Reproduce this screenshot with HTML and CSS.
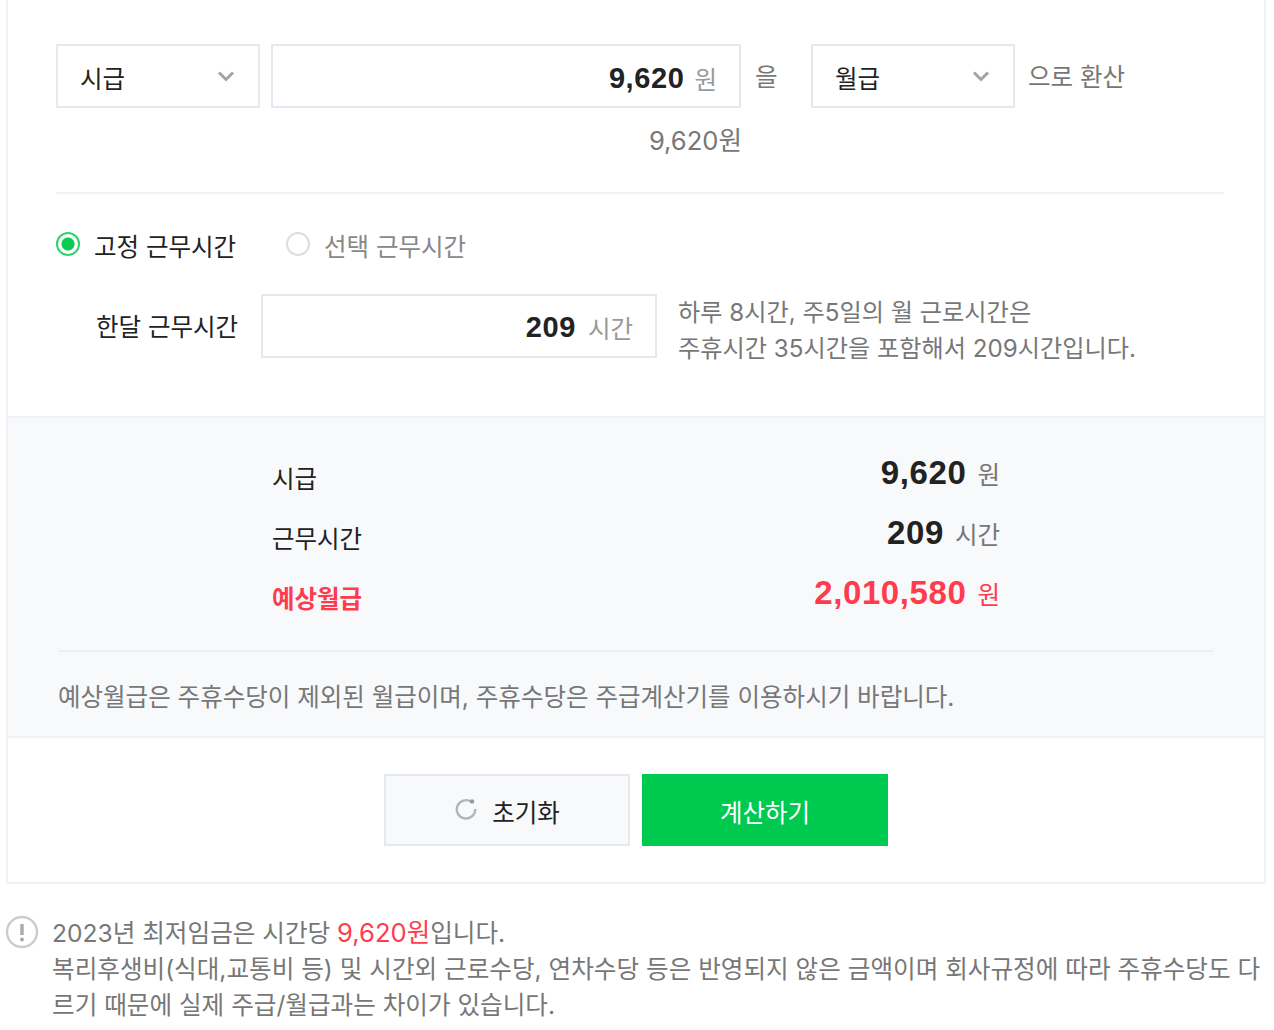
FILE: index.html
```html
<!DOCTYPE html>
<html lang="ko">
<head>
    <meta charset="UTF-8">
    <meta name="viewport" content="width=device-width, initial-scale=1.0">
    <title>월급 계산기</title>
    <link rel="stylesheet" href="styles.css">
</head>
<body>
    <div class="calc">
        <div class="form">
            <div class="convert-row">
                <div class="select select-from">
                    <span>시급</span>
                    <svg class="chevron" width="18" height="12" viewBox="0 0 18 12"><path d="M2 2.5 L9 9.5 L16 2.5" fill="none" stroke="#a3a3a3" stroke-width="3"/></svg>
                </div>
                <div class="field field-wage"><b>9,620</b><span class="unit">원</span></div>
                <span class="word word-eul">을</span>
                <div class="select select-to">
                    <span>월급</span>
                    <svg class="chevron" width="18" height="12" viewBox="0 0 18 12"><path d="M2 2.5 L9 9.5 L16 2.5" fill="none" stroke="#a3a3a3" stroke-width="3"/></svg>
                </div>
                <span class="word word-to">으로 환산</span>
            </div>
            <div class="wage-hint">9,620원</div>
            <hr class="line">
            <div class="radio-row">
                <label class="radio radio-on"><i class="dot"></i>고정 근무시간</label>
                <label class="radio radio-off"><i class="dot"></i>선택 근무시간</label>
            </div>
            <div class="hours-row">
                <span class="hours-label">한달 근무시간</span>
                <div class="field field-hours"><b>209</b><span class="unit">시간</span></div>
                <p class="hours-note">하루 8시간, 주5일의 월 근로시간은<br>주휴시간 35시간을 포함해서 209시간입니다.</p>
            </div>
        </div>

        <div class="result">
            <dl class="result-list">
                <div class="result-row">
                    <dt>시급</dt>
                    <dd><b>9,620</b><span class="unit">원</span></dd>
                </div>
                <div class="result-row">
                    <dt>근무시간</dt>
                    <dd><b>209</b><span class="unit">시간</span></dd>
                </div>
                <div class="result-row result-total">
                    <dt>예상월급</dt>
                    <dd><b>2,010,580</b><span class="unit">원</span></dd>
                </div>
            </dl>
            <p class="result-note">예상월급은 주휴수당이 제외된 월급이며, 주휴수당은 주급계산기를 이용하시기 바랍니다.</p>
        </div>

        <div class="buttons">
            <button class="btn btn-reset">
                <svg width="24" height="24" viewBox="0 0 24 24"><path d="M17 3.6 A9.2 9.2 0 1 0 21.2 11" fill="none" stroke="#b5b5b5" stroke-width="2.4"/><circle cx="18" cy="3.4" r="2.2" fill="#999"/></svg>
                초기화
            </button>
            <button class="btn btn-submit">계산하기</button>
        </div>
    </div>

    <div class="notice">
        <svg class="notice-icon" width="34" height="34" viewBox="0 0 34 34"><circle cx="17" cy="17" r="15" fill="#fff" stroke="#ccc" stroke-width="2.4"/><path d="M17 9 V20" stroke="#aaa" stroke-width="3.4"/><circle cx="17" cy="24.5" r="2" fill="#aaa"/></svg>
        <p>2023년 최저임금은 시간당 <em>9,620원</em>입니다.<br>복리후생비(식대,교통비 등) 및 시간외 근로수당, 연차수당 등은 반영되지 않은 금액이며 회사규정에 따라 주휴수당도 다르기 때문에 실제 주급/월급과는 차이가 있습니다.</p>
    </div>
</body>
</html>
```

FILE: styles.css
```css
* {
    box-sizing: border-box;
}

html, body {
    height: 1030px;
    overflow: hidden;
}

body {
    margin: 0;
    background-color: white;
    color: #222;
    font-family: 'Inter', 'Noto Sans CJK KR', sans-serif;
    font-size: 24.5px;
}

b {
    font-family: 'Liberation Sans', sans-serif;
}

.calc {
    margin-left: 6px;
    width: 1260px;
    height: 884px;
    border: 2px solid #f0f2f5;
    border-top: none;
}

.form {
    height: 416px;
    padding: 44px 40px 0 48px;
}

.convert-row {
    display: flex;
    height: 64px;
}

.select {
    display: flex;
    align-items: center;
    justify-content: space-between;
    width: 204px;
    padding: 6px 23px 0 22px;
    border: 2px solid #e4e8ef;
    line-height: 1;
}

.select .chevron {
    margin-top: -6px;
}

.field {
    display: flex;
    align-items: center;
    justify-content: flex-end;
    height: 64px;
    border: 2px solid #e4e8ef;
    padding: 4px 22px 0 0;
}

.field b {
    font-size: 29px;
    letter-spacing: 0.6px;
}

.unit {
    margin-left: 10px;
    color: #999;
}

.field-hours .unit {
    margin-left: 12px;
}

.field-wage {
    width: 470px;
    margin-left: 11px;
}

.word {
    color: #777;
    line-height: 64px;
    margin-top: 1px;
}

.word-eul {
    width: 70px;
    padding-left: 14px;
}

.word-to {
    margin-left: 13px;
}

.wage-hint {
    margin-top: 15px;
    width: 686px;
    text-align: right;
    color: #777;
    font-size: 25.6px;
    line-height: 36px;
}

.line {
    margin: 33px 0 0;
    border: none;
    border-top: 2px solid #f0f2f5;
}

.radio-row {
    display: flex;
    margin-top: 33px;
    height: 36px;
    align-items: center;
}

.radio {
    display: flex;
    align-items: center;
}

.radio-on {
    width: 230px;
}

.radio-off {
    color: #888;
}

.dot {
    width: 24px;
    height: 24px;
    margin: -2px 14px 0 0;
    border-radius: 50%;
}

.radio-on .dot {
    border: 2px solid #2fd36e;
    background: radial-gradient(circle, #0acb50 0 6px, white 7px);
}

.radio-off .dot {
    border: 2px solid #ddd;
    background-color: white;
}

.hours-row {
    display: flex;
    align-items: center;
    margin-top: 27px;
}

.hours-label {
    width: 205px;
    padding-left: 40px;
    margin-top: -6px;
}

.field-hours {
    width: 396px;
    margin-top: -6px;
}

.hours-note {
    margin: 5px 0 0 21px;
    color: #777;
    font-size: 24.2px;
    line-height: 36px;
}

.result {
    height: 322px;
    padding: 25px 50px 0;
    background-color: #f8f9fb;
    border-top: 2px solid #f0f2f5;
    border-bottom: 2px solid #f0f2f5;
}

.result-list {
    margin: 0 0 0 214px;
    width: 728px;
}

.result-row {
    display: flex;
    justify-content: space-between;
    align-items: center;
    height: 60px;
}

.result-row dt {
    margin-top: 8px;
}

.result-row dd {
    margin: 0;
}

.result-row b {
    font-size: 33px;
    letter-spacing: 0.6px;
}

.result-row .unit {
    margin-left: 11px;
    color: #777;
}

.result-row.result-total {
    color: #ff3b4e;
    font-weight: bold;
}

.result-row.result-total .unit {
    color: #ff3b4e;
    font-weight: normal;
}

.result-note {
    margin: 27px 0 0;
    padding-top: 27px;
    border-top: 2px solid #eceff3;
    color: #777;
    line-height: 36px;
}

.buttons {
    display: flex;
    justify-content: center;
    gap: 12px;
    padding-top: 36px;
}

.btn {
    display: flex;
    align-items: center;
    justify-content: center;
    gap: 14px;
    width: 246px;
    height: 72px;
    padding: 2px 0 0;
    font: inherit;
    cursor: pointer;
}

.btn svg {
    margin-top: -2px;
}

.btn-reset {
    background-color: #f8f9fb;
    border: 2px solid #e6e8ef;
    color: #222;
}

.btn-submit {
    background-color: #00c94f;
    border: none;
    color: white;
}

.notice {
    position: relative;
    margin-top: 31px;
    padding: 0 0 0 52px;
    color: #777;
    font-size: 24.6px;
}

.notice-icon {
    position: absolute;
    left: 5px;
    top: 0;
}

.notice p {
    margin: 0;
    line-height: 36px;
}

.notice em {
    font-style: normal;
    font-size: 25.6px;
    color: #ff3b4e;
}
```
